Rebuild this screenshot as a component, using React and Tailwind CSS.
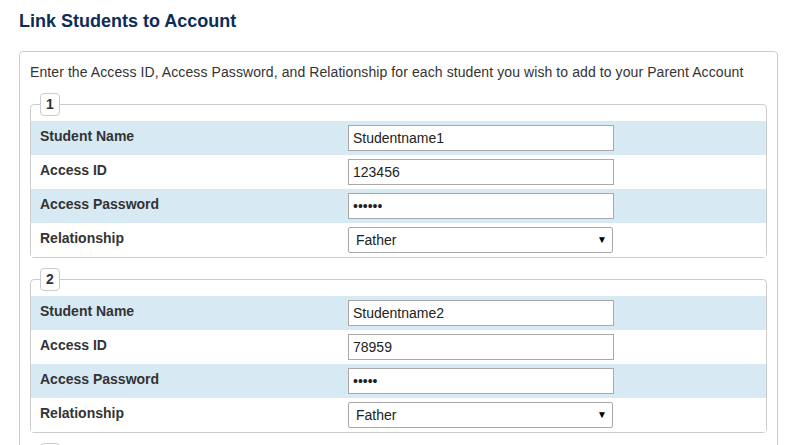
import { useState } from "react";

const students = [
  { id: 1, name: "Studentname1", accessId: "123456", password: "123456", relation: "Father" },
  { id: 2, name: "Studentname2", accessId: "78959", password: "12345", relation: "Father" },
  { id: 3, name: "", accessId: "", password: "", relation: "Father" },
];

function Row({ label, shaded, children }) {
  return (
    <div className={`flex h-[34px] ${shaded ? "bg-[#d7e9f3]" : "bg-white"}`}>
      <div className="w-[317px] shrink-0 pl-[9px] pt-[5px] text-[14px] font-bold leading-[20px] text-[#333]">
        {label}
      </div>
      <div className="pt-[4px]">{children}</div>
    </div>
  );
}

function StudentFieldset({ student }) {
  const [values, setValues] = useState(student);
  const set = (k) => (e) => setValues({ ...values, [k]: e.target.value });

  const inputCls =
    "block h-[26px] w-[266px] border border-[#a9a9a9] bg-white px-[4px] text-[14px] text-[#222] outline-none";

  return (
    <fieldset className="rounded-[4px] border border-[#ccc] pb-0 pt-[5px]">
      <legend className="ml-[9px] flex h-[23px] w-[20px] items-center justify-center rounded-[4px] border border-[#ccc] bg-white text-[14px] font-bold leading-[21px] text-[#333]">
        <span>{student.id}</span>
      </legend>
      <Row label="Student Name" shaded>
        <input className={inputCls} value={values.name} onChange={set("name")} />
      </Row>
      <Row label="Access ID">
        <input className={inputCls} value={values.accessId} onChange={set("accessId")} />
      </Row>
      <Row label="Access Password" shaded>
        <input type="password" className={inputCls} value={values.password} onChange={set("password")} />
      </Row>
      <Row label="Relationship">
        <div className="relative w-[265px]">
          <select
            className="block h-[26px] w-[265px] appearance-none rounded-[2px] border border-[#a9a9a9] bg-white pl-[7px] text-[14px] text-[#222] outline-none"
            value={values.relation}
            onChange={set("relation")}
          >
            <option>Father</option>
            <option>Mother</option>
            <option>Guardian</option>
          </select>
          <span className="pointer-events-none absolute right-[6px] top-[6px] text-[10px] leading-[14px] text-black">▼</span>
        </div>
      </Row>
    </fieldset>
  );
}

export default function App() {
  return (
    <div className="min-h-screen bg-white font-['Liberation_Sans',Arial,sans-serif] text-[#333]">
      <h2 className="px-[19px] pt-[10px] text-[18px] font-bold leading-[22px] text-[#0c2d55]">
        Link Students to Account
      </h2>

      <div className="ml-[19px] mt-[19px] w-[759px] rounded-[4px] border border-[#ccc] p-[10px]">
        <p className="text-[14px] leading-[20px] tracking-[0.09px] text-[#333]">
          Enter the Access ID, Access Password, and Relationship for each student you wish to add to your Parent Account
        </p>

        <div className="mt-[11px] flex flex-col gap-[10px]">
          {students.map((s) => (
            <StudentFieldset key={s.id} student={s} />
          ))}
        </div>
      </div>
    </div>
  );
}
